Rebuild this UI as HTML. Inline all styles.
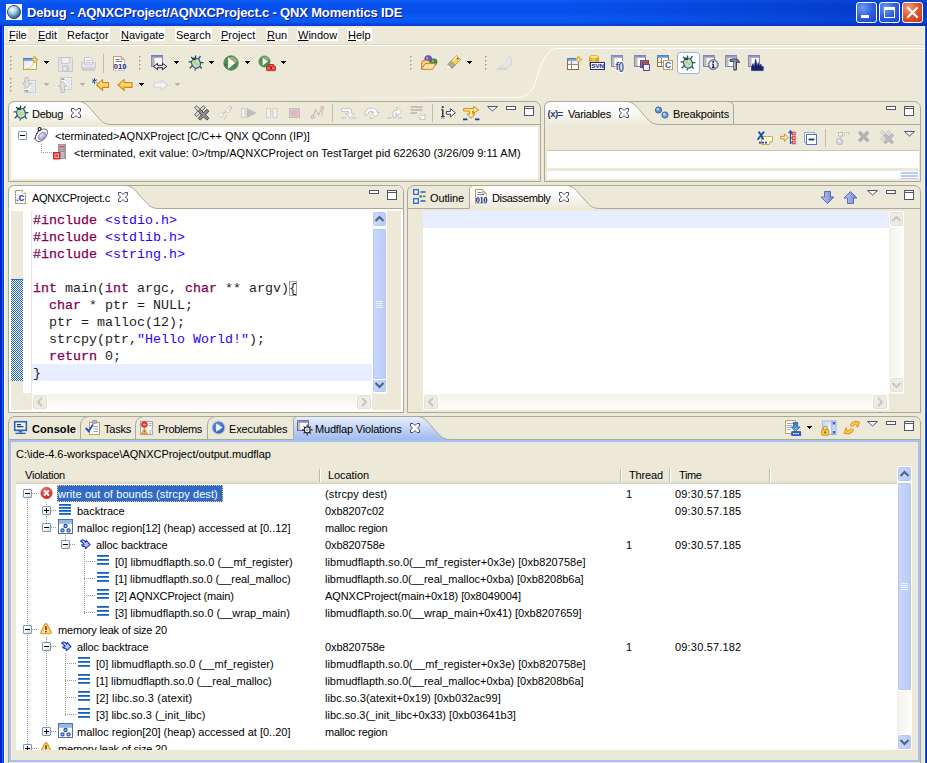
<!DOCTYPE html>
<html><head><meta charset="utf-8"><title>Debug - QNX Momentics IDE</title>
<style>
html,body{margin:0;padding:0}
body{width:927px;height:763px;overflow:hidden;background:#ECE9D8;position:relative;font-family:"Liberation Sans",sans-serif;font-size:11px;color:#000}
div,span.t,span.m,span.c{position:absolute;box-sizing:border-box}
span.t{white-space:pre;line-height:13px;font-size:11px}
span.m{white-space:pre;line-height:12px;height:13px;font-size:11px;background:#FEFEFB;padding:1px 1px 0 1px}
span.c{white-space:pre;font-family:"Liberation Mono",monospace;font-size:13.33px;line-height:17px;color:#1c1c1c}
.i{width:16px;height:16px;overflow:visible}
.i svg{position:absolute;left:0;top:0;overflow:visible}
svg.a{position:absolute;overflow:visible}
u{text-decoration:underline}
.white{background:#fff}
</style></head>
<body>
<div style="left:0px;top:0px;width:927px;height:26px;background:linear-gradient(to bottom,#0C5CF6 0%,#0A58F2 8%,#0850EC 18%,#0850EC 50%,#0A5AF6 68%,#0A58F4 84%,#0848E0 93%,#0638C8 100%);"></div>
<div style="left:0px;top:26px;width:2px;height:737px;background:#0020D0"></div>
<div style="left:2px;top:26px;width:1px;height:737px;background:#0C64F0"></div>
<div style="left:3px;top:26px;width:1px;height:737px;background:#0040E0"></div>
<div style="left:4px;top:26px;width:1px;height:737px;background:#F8F5E6"></div>
<div style="left:924px;top:26px;width:1px;height:737px;background:#F8F5E6"></div>
<div style="left:925px;top:26px;width:1px;height:737px;background:#0C58EC"></div>
<div style="left:926px;top:26px;width:1px;height:737px;background:#0028D4"></div>
<div style="left:560px;top:0px;width:367px;height:26px;background:linear-gradient(to right,rgba(0,20,140,0),rgba(0,20,140,0.32) 80%,rgba(0,20,140,0.36))"></div>
<div class="i" style="left:6px;top:4px"><svg width="16" height="16" viewBox="0 0 16 16"><rect x="0" y="0" width="16" height="16" fill="#fff"/><defs><radialGradient id="ga" cx="38%" cy="32%" r="70%"><stop offset="0" stop-color="#fff"/><stop offset="0.4" stop-color="#A8D4EC"/><stop offset="1" stop-color="#1E4E8A"/></radialGradient></defs><circle cx="8" cy="8" r="6.6" fill="url(#ga)" stroke="#2A4E86" stroke-width="0.9"/></svg></div>
<span class="t" style="left:27px;top:5px;font-size:13px;font-weight:bold;color:#fff;line-height:16px;letter-spacing:-0.17px;text-shadow:1px 1px 0 #0A1883">Debug - AQNXCProject/AQNXCProject.c - QNX Momentics IDE</span>
<div style="left:856px;top:2px;width:21px;height:21px;background:radial-gradient(circle at 30% 25%,#6E9AF2 0%,#2D5FE0 50%,#1C44C4 100%);border:1px solid #fff;border-radius:3px"><div style="left:4px;top:12px;width:8px;height:3px;background:#fff"></div></div>
<div style="left:879px;top:2px;width:21px;height:21px;background:radial-gradient(circle at 30% 25%,#6E9AF2 0%,#2D5FE0 50%,#1C44C4 100%);border:1px solid #fff;border-radius:3px"><div style="left:4px;top:4px;width:11px;height:11px;border:1px solid #fff;border-top:3px solid #fff"></div></div>
<div style="left:902px;top:2px;width:21px;height:21px;background:radial-gradient(circle at 30% 25%,#F0A080 0%,#E2562E 45%,#C4341C 100%);border:1px solid #fff;border-radius:3px"><svg class="a" width="19" height="19" style="left:0;top:0"><path d="M5 5L14 14M14 5L5 14" stroke="#fff" stroke-width="2.2" stroke-linecap="square"/></svg></div>
<span class="m" style="left:8px;top:28px"><u>F</u>ile</span>
<span class="m" style="left:37px;top:28px"><u>E</u>dit</span>
<span class="m" style="left:66px;top:28px">Refac<u>t</u>or</span>
<span class="m" style="left:120px;top:28px"><u>N</u>avigate</span>
<span class="m" style="left:175px;top:28px">Se<u>a</u>rch</span>
<span class="m" style="left:220px;top:28px"><u>P</u>roject</span>
<span class="m" style="left:266px;top:28px"><u>R</u>un</span>
<span class="m" style="left:297px;top:28px"><u>W</u>indow</span>
<span class="m" style="left:347px;top:28px"><u>H</u>elp</span>
<div style="left:4px;top:44px;width:921px;height:1px;background:#DDD9C9"></div>
<div style="left:5px;top:45px;width:920px;height:1px;background:#FBFAF4"></div>
<div style="left:10px;top:56px;width:2px;height:2px;background:#ABA794"></div><div style="left:11px;top:57px;width:1px;height:1px;background:#fff"></div><div style="left:10px;top:60px;width:2px;height:2px;background:#ABA794"></div><div style="left:11px;top:61px;width:1px;height:1px;background:#fff"></div><div style="left:10px;top:64px;width:2px;height:2px;background:#ABA794"></div><div style="left:11px;top:65px;width:1px;height:1px;background:#fff"></div><div style="left:10px;top:68px;width:2px;height:2px;background:#ABA794"></div><div style="left:11px;top:69px;width:1px;height:1px;background:#fff"></div>
<div style="left:10px;top:78px;width:2px;height:2px;background:#ABA794"></div><div style="left:11px;top:79px;width:1px;height:1px;background:#fff"></div><div style="left:10px;top:82px;width:2px;height:2px;background:#ABA794"></div><div style="left:11px;top:83px;width:1px;height:1px;background:#fff"></div><div style="left:10px;top:86px;width:2px;height:2px;background:#ABA794"></div><div style="left:11px;top:87px;width:1px;height:1px;background:#fff"></div><div style="left:10px;top:90px;width:2px;height:2px;background:#ABA794"></div><div style="left:11px;top:91px;width:1px;height:1px;background:#fff"></div>
<div class="i" style="left:22px;top:55px"><svg width="16" height="16" viewBox="0 0 16 16"><defs><linearGradient id="gn" x1="0" y1="0" x2="1" y2="1"><stop offset="0" stop-color="#DCE9FB"/><stop offset="1" stop-color="#fff"/></linearGradient></defs><rect x="1.5" y="3.5" width="13" height="11" fill="url(#gn)" stroke="#C9A347"/><rect x="1" y="3" width="10" height="2.6" fill="#3F76CC"/><path d="M1 4.4H11" stroke="#9CC0F0" stroke-width="0.7"/><path d="M4 14Q11 13.5 12 6" fill="none" stroke="#F2D873" stroke-width="1.2"/><path d="M12.5 1.0L13.5 3.5L16.0 4.5L13.5 5.5L12.5 8.0L11.5 5.5L9.0 4.5L11.5 3.5Z" fill="#FFF6C8" stroke="#D29B1E" stroke-width="1"/></svg></div>
<svg class="a" width="5" height="3" style="left:44px;top:61px" shape-rendering="crispEdges"><path d="M0 0H5V1H0ZM1 1H4V2H1ZM2 2H3V3H2Z" fill="#000"/></svg>
<div class="i" style="left:58px;top:56px"><svg width="16" height="16" viewBox="0 0 16 16"><rect x="0.5" y="1.5" width="14" height="14" fill="#E4E4E6" stroke="#BDBDC2" stroke-dasharray="1.5 0.7"/><rect x="3.5" y="1.8" width="8" height="5.5" fill="#F1F1F1" stroke="#BDBDC2" stroke-width="0.7"/><rect x="4.5" y="10" width="6" height="5" fill="#D6D6DA" stroke="#BDBDC2" stroke-width="0.7"/><rect x="5.8" y="11.3" width="2" height="3" fill="#F1F1F1"/></svg></div>
<div class="i" style="left:81px;top:56px"><svg width="16" height="16" viewBox="0 0 16 16"><rect x="0.5" y="6.5" width="14" height="6" rx="1" fill="#E4E4E6" stroke="#BDBDC2" stroke-width="0.8"/><path d="M3.5 8V1.5H9L11.5 4V8Z" fill="#F8F8F8" stroke="#BDBDC2" stroke-width="0.8"/><path d="M5 4.5H9.5M5 6.5H9.5" stroke="#BDBDC2" stroke-width="0.9"/><rect x="1.5" y="12" width="12" height="2.6" fill="#CFCFD6" stroke="#BDBDC2" stroke-width="0.5"/></svg></div>
<div style="left:103px;top:54px;width:1px;height:19px;background:#BFC0AC"></div>
<div class="i" style="left:112px;top:55px"><svg width="15" height="16" viewBox="0 0 15 16"><path d="M1.5 1.5H9L12.5 5V15.5H1.5Z" fill="#fff" stroke="#B8B8C8" stroke-width="0.8"/><path d="M1.5 15.5V1.5H9" fill="none" stroke="#C9A060"/><path d="M9 1.5L12.5 5H9Z" fill="#E8C078" stroke="#C9A060" stroke-width="0.7"/><path d="M3.5 4.5H7.5M3.5 6.5H10" stroke="#4A74C8" stroke-width="1.1"/><text x="1.8" y="14.2" font-family="Liberation Sans" font-weight="bold" font-size="7.6" fill="#14286E" letter-spacing="0">010</text></svg></div>
<div style="left:139px;top:56px;width:2px;height:2px;background:#ABA794"></div><div style="left:140px;top:57px;width:1px;height:1px;background:#fff"></div><div style="left:139px;top:60px;width:2px;height:2px;background:#ABA794"></div><div style="left:140px;top:61px;width:1px;height:1px;background:#fff"></div><div style="left:139px;top:64px;width:2px;height:2px;background:#ABA794"></div><div style="left:140px;top:65px;width:1px;height:1px;background:#fff"></div><div style="left:139px;top:68px;width:2px;height:2px;background:#ABA794"></div><div style="left:140px;top:69px;width:1px;height:1px;background:#fff"></div>
<div class="i" style="left:150px;top:55px"><svg width="17" height="16" viewBox="0 0 17 16"><rect x="1.5" y="0.5" width="11" height="11" fill="#fff" stroke="#8A86B0"/><rect x="1" y="0" width="12" height="2.6" fill="#6F6DB6"/><path d="M1 1.2H13" stroke="#B8B6E0" stroke-width="0.6"/><rect x="2" y="2.6" width="2.6" height="8.4" fill="#B4B4B4"/><path d="M3.5 11.5L7.5 8.3V10.3H12.5V8.3L16.8 11.5L12.5 14.7V12.7H7.5V14.7Z" fill="#E6E2F6" stroke="#1E1E2E" stroke-width="1"/></svg></div>
<svg class="a" width="5" height="3" style="left:174px;top:61px" shape-rendering="crispEdges"><path d="M0 0H5V1H0ZM1 1H4V2H1ZM2 2H3V3H2Z" fill="#000"/></svg>
<div class="i" style="left:188px;top:55px"><svg width="16" height="16" viewBox="0 0 16 16"><path d="M3.2 1.8L5.8 5M12.5 1.2L10 4.6M0.6 6.8H4M12 7.6H15.4M1.8 13.2L4.6 10.4M13.6 13.6L11.4 10.6M7.6 0.6V3.2M7.2 13.4V15.4" stroke="#1E4A3E" stroke-width="1.25" fill="none"/><ellipse cx="8" cy="8.2" rx="4.3" ry="5" transform="rotate(-20 8 8.2)" fill="#C4DFAE" stroke="#1C5FA0" stroke-width="1.2"/><ellipse cx="7.6" cy="8" rx="2.2" ry="2.8" transform="rotate(-20 7.6 8)" fill="#DCD79A"/><path d="M6 6.4L9.6 10" stroke="#8FB070" stroke-width="0.8"/><ellipse cx="6.4" cy="3.9" rx="1.9" ry="1.4" fill="#1E4A5E"/></svg></div>
<svg class="a" width="5" height="3" style="left:209px;top:61px" shape-rendering="crispEdges"><path d="M0 0H5V1H0ZM1 1H4V2H1ZM2 2H3V3H2Z" fill="#000"/></svg>
<div class="i" style="left:223px;top:55px"><svg width="16" height="16" viewBox="0 0 16 16"><circle cx="8" cy="8" r="7.2" fill="#4C9150"/><circle cx="8" cy="8" r="7.2" fill="none" stroke="#3F7F43" stroke-width="0.8"/><path d="M9 1.6A6.6 6.6 0 0 1 14.4 6.4L12 7.8L6 2.6Z" fill="#A7AE8C" opacity="0.85"/><path d="M5.2 2.2L12.4 8L5.2 13.8Z" fill="#fff"/><path d="M5.2 2.2L12.4 8" stroke="#E0B040" stroke-width="0.8"/><path d="M1.6 9L2.6 11L3.6 9M11 10.5L12.2 9" stroke="#2E5E30" stroke-width="0.7" fill="none"/></svg></div>
<svg class="a" width="5" height="3" style="left:245px;top:61px" shape-rendering="crispEdges"><path d="M0 0H5V1H0ZM1 1H4V2H1ZM2 2H3V3H2Z" fill="#000"/></svg>
<div class="i" style="left:258px;top:55px"><svg width="18" height="16" viewBox="0 0 18 16"><circle cx="6.5" cy="6.5" r="5.6" fill="#4C9150" stroke="#3F7F43" stroke-width="0.6"/><path d="M7 1.6A5 5 0 0 1 11.4 5L9.6 6L5.4 2.6Z" fill="#A7AE8C" opacity="0.8"/><path d="M4.6 2.6L9.8 6.5L4.6 10.4Z" fill="#fff"/><rect x="8.5" y="11" width="9" height="4.6" rx="0.8" fill="#E8423A" stroke="#B4201C" stroke-width="0.8"/><path d="M10.8 11V9.6H15.2V11" fill="none" stroke="#C02824" stroke-width="1.2"/><path d="M9.5 13H16.5" stroke="#F8A8A0" stroke-width="0.8"/><rect x="12.2" y="12.2" width="1.8" height="1.6" fill="#7A1410"/></svg></div>
<svg class="a" width="5" height="3" style="left:281px;top:61px" shape-rendering="crispEdges"><path d="M0 0H5V1H0ZM1 1H4V2H1ZM2 2H3V3H2Z" fill="#000"/></svg>
<div class="i" style="left:22px;top:77px"><svg width="16" height="16" viewBox="0 0 16 16"><rect x="2.5" y="3.5" width="11" height="12" fill="#F4F4F6" stroke="#BDBDC2" stroke-dasharray="1.5 0.7"/><path d="M9 6H12.5M9 8H12.5M9 10H12.5M8 12H12.5M6 14H12.5" stroke="#C8D4E4" stroke-width="0.9"/><path d="M3 0.5H6.5V6H9.5L4.8 11.5L0.2 6H3Z" fill="#E2DFD6" stroke="#BDBDC2" stroke-width="0.9"/><rect x="3.2" y="13" width="3" height="1.8" fill="#9C9CA8"/></svg></div>
<svg class="a" width="5" height="3" style="left:44px;top:83px" shape-rendering="crispEdges"><path d="M0 0H5V1H0ZM1 1H4V2H1ZM2 2H3V3H2Z" fill="#B5B1A2"/></svg>
<div class="i" style="left:58px;top:77px"><svg width="16" height="16" viewBox="0 0 16 16"><rect x="2.5" y="0.5" width="11" height="12" fill="#F4F4F6" stroke="#BDBDC2" stroke-dasharray="1.5 0.7"/><path d="M7.5 3H12M8.5 5H12M9.5 7H12M10 9H12M10 11H12" stroke="#C8D4E4" stroke-width="0.9"/><path d="M3 15.5H6.5V9.5H9L4.6 4L0.2 9.5H3Z" fill="#E2DFD6" stroke="#BDBDC2" stroke-width="0.9"/><rect x="3.4" y="1.4" width="3" height="1.6" fill="#9C9CA8"/></svg></div>
<svg class="a" width="5" height="3" style="left:80px;top:83px" shape-rendering="crispEdges"><path d="M0 0H5V1H0ZM1 1H4V2H1ZM2 2H3V3H2Z" fill="#B5B1A2"/></svg>
<div class="i" style="left:92px;top:77px"><svg width="18" height="16" viewBox="0 0 18 16"><defs><linearGradient id="ya1" x1="0" y1="0" x2="0" y2="1"><stop offset="0" stop-color="#FFF4C4"/><stop offset="0.55" stop-color="#FAD566"/><stop offset="1" stop-color="#F2B93A"/></linearGradient></defs><path d="M4.6 8L10.6 2.6V5.6H16.6V10.4H10.6V13.4Z" fill="url(#ya1)" stroke="#D08A14" stroke-width="1.1" stroke-linejoin="round"/><path d="M2.5 1.2V6.8M0.2 2.6L4.8 5.4M4.8 2.6L0.2 5.4" stroke="#2444A8" stroke-width="1.1"/></svg></div>
<div class="i" style="left:117px;top:77px"><svg width="16" height="16" viewBox="0 0 16 16"><defs><linearGradient id="ya2" x1="0" y1="0" x2="0" y2="1"><stop offset="0" stop-color="#FFF4C4"/><stop offset="0.55" stop-color="#FAD566"/><stop offset="1" stop-color="#F2B93A"/></linearGradient></defs><path d="M1 8L7.2 2.6V5.6H15V10.4H7.2V13.4Z" fill="url(#ya2)" stroke="#D08A14" stroke-width="1.1" stroke-linejoin="round"/></svg></div>
<svg class="a" width="5" height="3" style="left:139px;top:83px" shape-rendering="crispEdges"><path d="M0 0H5V1H0ZM1 1H4V2H1ZM2 2H3V3H2Z" fill="#000"/></svg>
<div class="i" style="left:153px;top:77px"><svg width="16" height="16" viewBox="0 0 16 16"><path d="M14.6 8L8.4 2.8V5.8H1.2V10.2H8.4V13.2Z" fill="#F4F4F4" stroke="#D4D4D8" stroke-width="1.1" stroke-linejoin="round"/></svg></div>
<svg class="a" width="5" height="3" style="left:175px;top:83px" shape-rendering="crispEdges"><path d="M0 0H5V1H0ZM1 1H4V2H1ZM2 2H3V3H2Z" fill="#B5B1A2"/></svg>
<div style="left:410px;top:56px;width:2px;height:2px;background:#ABA794"></div><div style="left:411px;top:57px;width:1px;height:1px;background:#fff"></div><div style="left:410px;top:60px;width:2px;height:2px;background:#ABA794"></div><div style="left:411px;top:61px;width:1px;height:1px;background:#fff"></div><div style="left:410px;top:64px;width:2px;height:2px;background:#ABA794"></div><div style="left:411px;top:65px;width:1px;height:1px;background:#fff"></div><div style="left:410px;top:68px;width:2px;height:2px;background:#ABA794"></div><div style="left:411px;top:69px;width:1px;height:1px;background:#fff"></div>
<div class="i" style="left:421px;top:55px"><svg width="16" height="16" viewBox="0 0 16 16"><circle cx="7.2" cy="4" r="3.5" fill="#6B56B4" stroke="#4A3A92" stroke-width="0.6"/><circle cx="6.2" cy="3" r="1.3" fill="#A898DC"/><circle cx="12.8" cy="7" r="3.3" fill="#3F8F4A" stroke="#2A6E34" stroke-width="0.6"/><circle cx="12" cy="6" r="1.1" fill="#86C48E"/><path d="M0.6 14.4V6.8L3 5.2H7L8.6 7" fill="#F4CE84" stroke="#D0742E" stroke-width="0.9"/><path d="M0.6 14.4L4 8.6H15L11.4 14.4Z" fill="#FBE3A6" stroke="#D0742E" stroke-width="0.9" stroke-linejoin="round"/></svg></div>
<div class="i" style="left:445px;top:55px"><svg width="16" height="16" viewBox="0 0 16 16"><path d="M0.4 14.8L3.8 8.8L7.8 12.6Z" fill="#FFFBE0" stroke="#EADCA0" stroke-width="0.6"/><path d="M3 9.4L6 6.2L10 10.2L7 13.4Z" fill="#A9A9B2" stroke="#8A6E3C" stroke-width="0.7"/><path d="M6 6.2L11.6 0.6L15.6 4.6L10 10.2Z" fill="#F7D263" stroke="#C48A1E" stroke-width="0.8"/><path d="M8.6 5L12 1.6" stroke="#FFF0B0" stroke-width="1.4"/><circle cx="12.6" cy="3.6" r="0.9" fill="#3A5AA8"/></svg></div>
<svg class="a" width="5" height="3" style="left:467px;top:61px" shape-rendering="crispEdges"><path d="M0 0H5V1H0ZM1 1H4V2H1ZM2 2H3V3H2Z" fill="#000"/></svg>
<div style="left:485px;top:56px;width:2px;height:2px;background:#ABA794"></div><div style="left:486px;top:57px;width:1px;height:1px;background:#fff"></div><div style="left:485px;top:60px;width:2px;height:2px;background:#ABA794"></div><div style="left:486px;top:61px;width:1px;height:1px;background:#fff"></div><div style="left:485px;top:64px;width:2px;height:2px;background:#ABA794"></div><div style="left:486px;top:65px;width:1px;height:1px;background:#fff"></div><div style="left:485px;top:68px;width:2px;height:2px;background:#ABA794"></div><div style="left:486px;top:69px;width:1px;height:1px;background:#fff"></div>
<div class="i" style="left:496px;top:55px"><svg width="16" height="16" viewBox="0 0 16 16"><path d="M3 13.4L13.4 1L15.2 2.6V10L10 13.4Z" fill="#E2E2E4" stroke="#D0D0D4" stroke-width="0.8"/><path d="M6 10L13 3M8.5 11.5L14.5 5.5" stroke="#F4F4F4" stroke-width="0.9"/><path d="M0.5 14.2H11" stroke="#BDBDC2" stroke-dasharray="1.2 0.8"/></svg></div>
<svg class="a" width="927" height="60" style="left:0;top:44px"><defs><linearGradient id="fl" x1="0" y1="0" x2="1" y2="0"><stop offset="0" stop-color="#fff" stop-opacity="0"/><stop offset="0.5" stop-color="#fff" stop-opacity="0.3"/><stop offset="1" stop-color="#fff" stop-opacity="0.9"/></linearGradient></defs><rect x="200" y="53" width="320" height="1" fill="url(#fl)"/><path d="M519 53.5 C 531 53.5 535 40 538 30 C 541 20 545 12 549 8 C 552 5 554 4.5 559 4.5 L925 4.5" fill="none" stroke="#fff" stroke-width="1"/></svg>
<div class="i" style="left:566px;top:55px"><svg width="16" height="16" viewBox="0 0 16 16"><rect x="1.5" y="3.5" width="11" height="11" fill="#fff" stroke="#8E6A44"/><rect x="1" y="3" width="9" height="2.6" fill="#3F76CC"/><path d="M1 4.4H10" stroke="#9CC0F0" stroke-width="0.7"/><path d="M5.5 6V14.5M1.5 9.5H12.5" stroke="#A88458"/><rect x="2" y="6" width="3" height="3" fill="#E4EEFB"/><rect x="6" y="6" width="6" height="3" fill="#E4EEFB"/><path d="M12.5 1.0L13.5 3.5L16.0 4.5L13.5 5.5L12.5 8.0L11.5 5.5L9.0 4.5L11.5 3.5Z" fill="#FFF6C8" stroke="#D29B1E" stroke-width="1"/></svg></div>
<div class="i" style="left:589px;top:55px"><svg width="16" height="16" viewBox="0 0 16 16"><defs><linearGradient id="gcy" x1="0" y1="0" x2="1" y2="0"><stop offset="0" stop-color="#E8A820"/><stop offset="0.45" stop-color="#FCE27A"/><stop offset="1" stop-color="#E09A18"/></linearGradient></defs><path d="M0.5 2V11.5H9.5V2Z" fill="url(#gcy)" stroke="#C88A18" stroke-width="0.6"/><ellipse cx="5" cy="2" rx="4.5" ry="1.7" fill="#FBE58C" stroke="#C88A18" stroke-width="0.6"/><path d="M0.5 5Q5 7 9.5 5" fill="none" stroke="#C88A18" stroke-width="0.7"/><rect x="1.5" y="7.5" width="14" height="7" fill="#F4F6FC" stroke="#1E2E7A"/><text x="2.6" y="13.4" font-family="Liberation Sans" font-weight="bold" font-size="6.2" fill="#1E2E7A" letter-spacing="-0.15">SVN</text></svg></div>
<div class="i" style="left:611px;top:55px"><svg width="17" height="16" viewBox="0 0 17 16"><rect x="0.5" y="0.5" width="11" height="11" fill="#fff" stroke="#8A86B0"/><rect x="0" y="0" width="12" height="2.6" fill="#7A78B8"/><path d="M0 1.2H12" stroke="#C0BEE4" stroke-width="0.6"/><rect x="1" y="2.6" width="2.6" height="8.4" fill="#BEBEB8"/><text x="4.6" y="14.6" font-family="Liberation Sans" font-weight="bold" font-size="10" fill="#4A5A94" stroke="#fff" stroke-width="1.6" paint-order="stroke" letter-spacing="-0.7">f()</text></svg></div>
<div class="i" style="left:634px;top:55px"><svg width="16" height="16" viewBox="0 0 16 16"><rect x="0.5" y="0.5" width="11" height="11" fill="#fff" stroke="#8A86B0"/><rect x="0" y="0" width="12" height="2.6" fill="#7A78B8"/><path d="M0 1.2H12" stroke="#C0BEE4" stroke-width="0.6"/><rect x="1" y="2.6" width="2.6" height="8.4" fill="#BEBEB8"/><rect x="6.5" y="5.5" width="8" height="7" fill="#7A74B4" stroke="#5A548E"/><rect x="8.5" y="7.5" width="6" height="5" fill="#E8463C" stroke="#B42A22" stroke-width="0.8"/><rect x="9.5" y="9.5" width="6" height="6" fill="#F8F6FF" stroke="#5A4E9E"/></svg></div>
<div class="i" style="left:657px;top:55px"><svg width="16" height="16" viewBox="0 0 16 16"><rect x="0.5" y="0.5" width="11" height="11" fill="#fff" stroke="#8E6A44"/><rect x="0" y="0" width="12" height="2.6" fill="#3F76CC"/><path d="M0 1.2H12" stroke="#9CC0F0" stroke-width="0.6"/><path d="M4.5 3V11.5M0.5 7.5H11.5" stroke="#A88458"/><rect x="1" y="3.2" width="3" height="3.6" fill="#E4EEFB"/><rect x="6.5" y="5.5" width="9" height="9" fill="#FDFDFB" stroke="#C49A50"/><text x="8" y="13.4" font-family="Liberation Sans" font-weight="bold" font-size="8.6" fill="#2E5CB8">C</text></svg></div>
<div style="left:677px;top:52px;width:23px;height:22px;border:1px solid #98B5E2;background:#fff;border-radius:3px"></div>
<div class="i" style="left:680px;top:55px"><svg width="16" height="16" viewBox="0 0 16 16"><path d="M3.2 1.8L5.8 5M12.5 1.2L10 4.6M0.6 6.8H4M12 7.6H15.4M1.8 13.2L4.6 10.4M13.6 13.6L11.4 10.6M7.6 0.6V3.2M7.2 13.4V15.4" stroke="#1E4A3E" stroke-width="1.25" fill="none"/><ellipse cx="8" cy="8.2" rx="4.3" ry="5" transform="rotate(-20 8 8.2)" fill="#C4DFAE" stroke="#1C5FA0" stroke-width="1.2"/><ellipse cx="7.6" cy="8" rx="2.2" ry="2.8" transform="rotate(-20 7.6 8)" fill="#DCD79A"/><path d="M6 6.4L9.6 10" stroke="#8FB070" stroke-width="0.8"/><ellipse cx="6.4" cy="3.9" rx="1.9" ry="1.4" fill="#1E4A5E"/></svg></div>
<div class="i" style="left:703px;top:55px"><svg width="16" height="16" viewBox="0 0 16 16"><rect x="0.5" y="0.5" width="11" height="11" fill="#fff" stroke="#8A86B0"/><rect x="0" y="0" width="12" height="2.6" fill="#7A78B8"/><path d="M0 1.2H12" stroke="#C0BEE4" stroke-width="0.6"/><rect x="1" y="2.6" width="2.6" height="8.4" fill="#BEBEB8"/><circle cx="10.2" cy="9.6" r="5" fill="#A8A8C4" stroke="#4A4A6A" stroke-width="1" stroke-dasharray="1.6 0.6"/><circle cx="10.2" cy="9.6" r="3.4" fill="#F0F0F8"/><path d="M10.3 9V12.4M9.2 9.2H10.3M9 12.4H11.6" stroke="#1E1E4A" stroke-width="1.3"/><circle cx="10.2" cy="7" r="0.95" fill="#1E1E4A"/></svg></div>
<div class="i" style="left:725px;top:55px"><svg width="16" height="16" viewBox="0 0 16 16"><rect x="0.5" y="0.5" width="11" height="11" fill="#fff" stroke="#8A86B0"/><rect x="0" y="0" width="12" height="2.6" fill="#7A78B8"/><path d="M0 1.2H12" stroke="#C0BEE4" stroke-width="0.6"/><rect x="1" y="2.6" width="2.6" height="8.4" fill="#BEBEB8"/><path d="M5 4.5Q9 3 13 4.5L14.6 7.4L12.6 7.4L12 6.4H11.4V15H8.8V6.4H5Z" fill="#8890A8" stroke="#2A2E48" stroke-width="0.9" stroke-linejoin="round"/><path d="M9.6 7V14" stroke="#D8DCEC" stroke-width="0.8"/></svg></div>
<div class="i" style="left:748px;top:55px"><svg width="16" height="16" viewBox="0 0 16 16"><rect x="0.5" y="0.5" width="11" height="11" fill="#fff" stroke="#8A86B0"/><rect x="0" y="0" width="12" height="2.6" fill="#7A78B8"/><path d="M0 1.2H12" stroke="#C0BEE4" stroke-width="0.6"/><rect x="1" y="2.6" width="2.6" height="8.4" fill="#BEBEB8"/><path d="M3.5 15.6V12L5 8.5L6.2 12L7.6 4L9.2 11L10.4 7.5L11.6 12L12.8 9L14 12.6L15.2 11V15.6Z" fill="#16206A" stroke="#16206A" stroke-width="0.6" stroke-linejoin="round"/></svg></div>
<svg class="a" width="0" height="0"><defs>
<linearGradient id="gw" x1="0" y1="0" x2="0" y2="1"><stop offset="0" stop-color="#FFFFFF"/><stop offset="0.45" stop-color="#FAF9F5"/><stop offset="1" stop-color="#ECE9D8"/></linearGradient>
<linearGradient id="gb" x1="0" y1="0" x2="0" y2="1"><stop offset="0" stop-color="#E9EFFB"/><stop offset="0.5" stop-color="#C3D4F4"/><stop offset="1" stop-color="#9EBAEE"/></linearGradient>
</defs></svg>
<div style="left:8px;top:101px;width:533px;height:81px;border:1px solid #ACA899;border-radius:7px 7px 0 0;background:#ECE9D8"></div>
<svg class="a" width="533" height="26" style="left:8px;top:101px"><path d="M0.5 23.5 V7 Q0.5 0.5 7.0 0.5 H69 C 76 0.5 79 3.5 83 8.5 L 91 17.5 C 95 22.0 98 23.5 104 23.5  V24.5 H0.5 Z" fill="url(#gw)"/><path d="M0.5 23.5 V7 Q0.5 0.5 7.0 0.5 H69 C 76 0.5 79 3.5 83 8.5 L 91 17.5 C 95 22.0 98 23.5 104 23.5  H532.5" fill="none" stroke="#ACA899"/></svg>
<div class="white" style="left:11px;top:127px;width:527px;height:52px;"></div>
<div class="i" style="left:13px;top:105px"><svg width="16" height="16" viewBox="0 0 16 16"><path d="M3.2 1.8L5.8 5M12.5 1.2L10 4.6M0.6 6.8H4M12 7.6H15.4M1.8 13.2L4.6 10.4M13.6 13.6L11.4 10.6M7.6 0.6V3.2M7.2 13.4V15.4" stroke="#1E4A3E" stroke-width="1.25" fill="none"/><ellipse cx="8" cy="8.2" rx="4.3" ry="5" transform="rotate(-20 8 8.2)" fill="#C4DFAE" stroke="#1C5FA0" stroke-width="1.2"/><ellipse cx="7.6" cy="8" rx="2.2" ry="2.8" transform="rotate(-20 7.6 8)" fill="#DCD79A"/><path d="M6 6.4L9.6 10" stroke="#8FB070" stroke-width="0.8"/><ellipse cx="6.4" cy="3.9" rx="1.9" ry="1.4" fill="#1E4A5E"/></svg></div>
<span class="t" style="left:32px;top:108px;;letter-spacing:-0.287px">Debug</span>
<svg class="a" width="10" height="10" style="left:71px;top:108px"><path d="M0.5 0.5H3L5 2.5L7 0.5H9.5V3L7.5 5L9.5 7V9.5H7L5 7.5L3 9.5H0.5V7L2.5 5L0.5 3Z" fill="#fff" stroke="#4A4A6E" stroke-width="1"/></svg>
<div class="i" style="left:194px;top:105px"><svg width="16" height="16" viewBox="0 0 16 16"><path d="M0.6 2.8l2.4 -2 3.6 3.6 3.6 -3.6 2.4 2 -3.6 4 3.6 4 -2.4 2 -3.6 -3.6 -3.6 3.6 -2.4 -2 3.6 -4Z" fill="#D8D8D8" stroke="#4A4A4A" stroke-width="0.9" transform="scale(0.9)"/><path d="M4.6 6.8l2.4 -2 3.6 3.6 3.6 -3.6 2.4 2 -3.6 4 3.6 4 -2.4 2 -3.6 -3.6 -3.6 3.6 -2.4 -2 3.6 -4Z" fill="#8E8E8E" stroke="#3A3A3A" stroke-width="0.9" transform="scale(0.9)"/></svg></div>
<div class="i" style="left:217px;top:105px"><svg width="16" height="16" viewBox="0 0 16 16"><path d="M1 10.5L4.5 7L7 9.5L3.5 13Z M8 5.5L11 2.5L13.5 5L10.5 8Z" fill="#F1F1F1" stroke="#BDBDC2" stroke-width="0.9" stroke-dasharray="1.4 0.7"/><path d="M5.5 8.5L9.5 6.5M12 1L15 2.5L13.5 5.5M9.5 10.5L7.5 14.5" fill="none" stroke="#BDBDC2" stroke-width="0.9"/></svg></div>
<div class="i" style="left:241px;top:105px"><svg width="16" height="16" viewBox="0 0 16 16"><rect x="0.5" y="3.5" width="3.6" height="9" fill="#F1F1F1" stroke="#BDBDC2" stroke-dasharray="1.4 0.7"/><path d="M6 3.4L15 8L6 12.6Z" fill="#B9BFB9" stroke="#BDBDC2" stroke-width="0.6"/></svg></div>
<div class="i" style="left:264px;top:105px"><svg width="16" height="16" viewBox="0 0 16 16"><rect x="2.5" y="3.5" width="4" height="9" fill="#F1F1F1" stroke="#BDBDC2" stroke-dasharray="1.4 0.7"/><rect x="9" y="3.5" width="4" height="9" fill="#F1F1F1" stroke="#BDBDC2" stroke-dasharray="1.4 0.7"/></svg></div>
<div class="i" style="left:287px;top:105px"><svg width="16" height="16" viewBox="0 0 16 16"><rect x="2.5" y="3.5" width="10" height="9" fill="#E6C4CC" stroke="#BDBDC2"/><rect x="4.5" y="5.5" width="6" height="5" fill="#D4A8B4"/><path d="M6 6V10M8 6V10M10 6V10" stroke="#EBD0D6" stroke-width="0.8"/></svg></div>
<div class="i" style="left:310px;top:105px"><svg width="16" height="16" viewBox="0 0 16 16"><path d="M3 11.5L5.5 4.5L8.5 10L12 3.5" fill="none" stroke="#BDBDC2" stroke-width="1.1"/><path d="M12 3.5V11" stroke="#BDBDC2" stroke-width="1"/><circle cx="12.4" cy="3" r="1.8" fill="#ECC8D0" stroke="#D0A8B4" stroke-width="0.7"/><circle cx="2.6" cy="12" r="1.8" fill="#ECC8D0" stroke="#D0A8B4" stroke-width="0.7"/></svg></div>
<div class="i" style="left:341px;top:105px"><svg width="16" height="16" viewBox="0 0 16 16"><path d="M0.6 3.6H8.4Q10.6 3.6 10.6 6V8.6H13.6L9.2 13.2L4.8 8.6H7.8V6.4H0.6Z" fill="#fff" stroke="#BDBDC2" stroke-width="0.9"/><path d="M0.5 13H4.5M11.5 13H15.5" stroke="#B4BCD8" stroke-width="1.6" stroke-dasharray="1.2 0.6"/></svg></div>
<div class="i" style="left:364px;top:105px"><svg width="16" height="16" viewBox="0 0 16 16"><path d="M1 10Q1 3.2 7.4 3.2Q12.6 3.2 13 7.4H15.4L11.4 12L7.4 7.4H10Q9.6 6 7.4 6Q3.8 6 3.8 10Z" fill="#fff" stroke="#BDBDC2" stroke-width="0.9"/><path d="M5.5 13H9.5" stroke="#B4BCD8" stroke-width="1.6" stroke-dasharray="1.2 0.6"/></svg></div>
<div class="i" style="left:387px;top:105px"><svg width="16" height="16" viewBox="0 0 16 16"><path d="M6 12.6V8Q6 5.4 8.6 5.4H10V2.4L14.8 6.8L10 11.2V8.2H8.8V12.6Z" fill="#fff" stroke="#BDBDC2" stroke-width="0.9"/><path d="M0.5 13H4.5M11 13H15" stroke="#B4BCD8" stroke-width="1.6" stroke-dasharray="1.2 0.6"/></svg></div>
<div class="i" style="left:410px;top:105px"><svg width="16" height="16" viewBox="0 0 16 16"><path d="M0.5 2H12.5M0.5 5H12.5M0.5 8H7" stroke="#B4B4B8" stroke-width="1.7"/><path d="M7.5 10.2Q10 7.6 12.6 9.6L14.4 8V13.4H9L10.8 11.6Q9.8 10.8 9 11.8Z" fill="#fff" stroke="#BDBDC2" stroke-width="0.9" stroke-linejoin="round" transform="translate(0.5,1)"/></svg></div>
<div class="i" style="left:440px;top:105px"><svg width="16" height="16" viewBox="0 0 16 16"><path d="M2.8 4.8V11.4" stroke="#3A3E52" stroke-width="1.6"/><path d="M1 11.6H4.8M1.2 4.6H2.8" stroke="#3A3E52" stroke-width="1.3"/><circle cx="2.8" cy="2.2" r="1.1" fill="#3A3E52"/><path d="M1 13.5H5" stroke="#7A8CC4" stroke-width="1" stroke-dasharray="1 1"/><path d="M6.4 6.4H10.6V3.8L15.4 7.8L10.6 11.8V9.2H6.4Z" fill="#fff" stroke="#3A3E52" stroke-width="1"/></svg></div>
<div class="i" style="left:463px;top:105px"><svg width="17" height="16" viewBox="0 0 17 16"><path d="M0.6 3.6H10.6V1.4L15.6 4.8L10.6 8.2V6H9.6V9H12L8 13.2L4 9H6.4V6H0.6Z" fill="#FDE9A0" stroke="#D08A14" stroke-width="1" stroke-linejoin="round"/><path d="M0 14.4H4.4M12 14.4H16.4" stroke="#1E3A9A" stroke-width="1.7"/></svg></div>
<div style="left:332px;top:104px;width:1px;height:18px;background:#BFC0AC"></div>
<div style="left:432px;top:104px;width:1px;height:18px;background:#BFC0AC"></div>
<svg class="a" width="11" height="6" style="left:487px;top:106px"><path d="M0.5 0.5H10.5L5.5 5Z" fill="#fff" stroke="#55556A" stroke-width="1"/></svg>
<div style="left:506px;top:106px;width:10px;height:4px;border:1px solid #55556A;background:#fff"></div><div style="left:524px;top:106px;width:10px;height:10px;border:1px solid #55556A;background:#fff"><div style="left:0;top:1px;width:8px;height:1px;background:#55556A"></div></div>
<div style="left:18px;top:131px;width:9px;height:9px;border:1px solid #7F9DB9;background:#fff;border-radius:1px"><div style="left:1px;top:3px;width:5px;height:1px;background:#000"></div></div>
<div class="i" style="left:33px;top:127px"><svg width="17" height="16" viewBox="0 0 17 16"><ellipse cx="8.4" cy="8.2" rx="7.4" ry="4.6" transform="rotate(-48 8.4 8.2)" fill="#fff" stroke="#6A6A7A" stroke-width="1"/><ellipse cx="9" cy="9" rx="4.6" ry="2.9" transform="rotate(-48 9 9)" fill="#B8B4E4" stroke="#8A86C0" stroke-width="0.8"/><ellipse cx="8.4" cy="8.4" rx="2.2" ry="1.2" transform="rotate(-48 8.4 8.4)" fill="#DEDCF4"/><circle cx="6.6" cy="2" r="1.5" fill="#fff" stroke="#111" stroke-width="1.2"/><path d="M5.6 3L1.2 12.4" stroke="#3A4A6A" stroke-width="0.9"/></svg></div>
<span class="t" style="left:55px;top:130px;;letter-spacing:-0.041px">&lt;terminated&gt;AQNXProject [C/C++ QNX QConn (IP)]</span>
<div style="left:41px;top:144px;width:1px;height:9px;background:repeating-linear-gradient(to bottom,#9A9A9A 0,#9A9A9A 1px,transparent 1px,transparent 2px)"></div>
<div style="left:41px;top:152px;width:11px;height:1px;background:repeating-linear-gradient(to right,#9A9A9A 0,#9A9A9A 1px,transparent 1px,transparent 2px)"></div>
<div class="i" style="left:52px;top:144px"><svg width="16" height="16" viewBox="0 0 16 16"><defs><linearGradient id="gsv" x1="0" y1="0" x2="1" y2="0"><stop offset="0" stop-color="#9A9AA2"/><stop offset="0.5" stop-color="#D8D8E0"/><stop offset="1" stop-color="#8E8E96"/></linearGradient></defs><rect x="6.5" y="0.5" width="7" height="14" fill="url(#gsv)" stroke="#8A8A92" stroke-width="0.8"/><rect x="7.6" y="1.8" width="4.8" height="1.8" fill="#E84A40"/><path d="M7.6 5.4H12.4M7.6 7.4H12.4" stroke="#7A7A86" stroke-width="0.9"/><rect x="9" y="9" width="2.4" height="4.6" fill="#B8B8D0"/><rect x="1.7" y="8.7" width="6" height="6" fill="#F6B0A8" stroke="#D42420" stroke-width="1.4"/><rect x="3.4" y="10.4" width="2.6" height="2.6" fill="#E84238"/></svg></div>
<span class="t" style="left:74px;top:147px;;letter-spacing:0.036px">&lt;terminated, exit value: 0&gt;/tmp/AQNXCProject on TestTarget pid 622630 (3/26/09 9:11 AM)</span>
<div style="left:544px;top:101px;width:377px;height:81px;border:1px solid #ACA899;border-radius:7px 7px 0 0;background:#ECE9D8"></div>
<svg class="a" width="377" height="26" style="left:544px;top:101px"><path d="M0.5 23.5 V7 Q0.5 0.5 7.0 0.5 H81 C 88 0.5 91 3.5 95 8.5 L 103 17.5 C 107 22.0 110 23.5 116 23.5  V24.5 H0.5 Z" fill="url(#gw)"/><path d="M0.5 23.5 V7 Q0.5 0.5 7.0 0.5 H81 C 88 0.5 91 3.5 95 8.5 L 103 17.5 C 107 22.0 110 23.5 116 23.5  H376.5" fill="none" stroke="#ACA899"/></svg>
<svg class="a" width="200" height="26" style="left:544px;top:101px"><path d="M116 0.5 H184 Q189.5 0.5 189.5 6 V23" fill="none" stroke="#ACA899"/></svg>
<div class="i" style="left:548px;top:105px"><svg width="18" height="16" viewBox="0 0 18 16"><text x="-0.5" y="11.5" font-family="Liberation Sans" font-weight="bold" font-size="9.6" fill="#2E3A6A" letter-spacing="-0.55">(x)=</text></svg></div>
<span class="t" style="left:568px;top:108px;;letter-spacing:-0.229px">Variables</span>
<svg class="a" width="10" height="10" style="left:619px;top:108px"><path d="M0.5 0.5H3L5 2.5L7 0.5H9.5V3L7.5 5L9.5 7V9.5H7L5 7.5L3 9.5H0.5V7L2.5 5L0.5 3Z" fill="#fff" stroke="#4A4A6E" stroke-width="1"/></svg>
<div class="i" style="left:654px;top:104px"><svg width="16" height="16" viewBox="0 0 16 16"><circle cx="4.5" cy="6" r="3.1" fill="#5F8FCB" stroke="#2E5E9E" stroke-width="0.9"/><circle cx="3.8" cy="5.2" r="1.2" fill="#C4DCF4"/><circle cx="11" cy="11" r="3.1" fill="#6FA3D8" stroke="#2E5E9E" stroke-width="0.9"/><circle cx="10.3" cy="10.2" r="1.2" fill="#C4DCF4"/></svg></div>
<span class="t" style="left:673px;top:108px;;letter-spacing:-0.193px">Breakpoints</span>
<div style="left:886px;top:106px;width:10px;height:4px;border:1px solid #55556A;background:#fff"></div><div style="left:904px;top:106px;width:10px;height:10px;border:1px solid #55556A;background:#fff"><div style="left:0;top:1px;width:8px;height:1px;background:#55556A"></div></div>
<div class="i" style="left:757px;top:130px"><svg width="16" height="16" viewBox="0 0 16 16"><path d="M4.5 6.5H15.5V11.5L12.5 14.5H4.5Z" fill="#FFFBE8" stroke="#D0A850"/><path d="M12.5 14.5V11.5H15.5" fill="#F4DC98" stroke="#D0A850" stroke-width="0.7"/><path d="M1.6 1.6Q4.4 5 6.4 9.6M7 1.6Q4 5.4 0.6 9.8" stroke="#1E4AB4" stroke-width="1.8" fill="none"/><path d="M2 12.6H10.4" stroke="#1E3A9A" stroke-width="1.7" stroke-dasharray="2 1"/></svg></div>
<div class="i" style="left:780px;top:130px"><svg width="16" height="16" viewBox="0 0 16 16"><path d="M0.6 6.4H4.4V4L8.4 7.6L4.4 11.2V8.8H0.6Z" fill="#FFF4C4" stroke="#C8881A" stroke-width="0.9"/><path d="M10.5 0.8V14M10.5 3.5H12.5M10.5 8H12.5M10.5 12.5H12.5" stroke="#2448A8" stroke-width="1.2"/><path d="M8.6 3.2L10.5 0.8L12.4 3.2" fill="none" stroke="#2448A8" stroke-width="1.1"/><rect x="12.4" y="2.2" width="2.8" height="2.8" fill="#F4A8A0" stroke="#DC3A32" stroke-width="0.9"/><rect x="12.4" y="6.6" width="2.8" height="2.8" fill="#F4A8A0" stroke="#DC3A32" stroke-width="0.9"/><rect x="12.4" y="11" width="2.8" height="2.8" fill="#F4A8A0" stroke="#DC3A32" stroke-width="0.9"/></svg></div>
<div class="i" style="left:803px;top:130px"><svg width="16" height="16" viewBox="0 0 16 16"><rect x="1.5" y="2.5" width="10" height="10" fill="#F4F8FF" stroke="#8CA8DC"/><rect x="3.5" y="4.5" width="10" height="10" fill="#fff" stroke="#4A72C0"/><path d="M5.6 9.5H11.4" stroke="#14306E" stroke-width="1.7"/></svg></div>
<div class="i" style="left:835px;top:130px"><svg width="16" height="16" viewBox="0 0 16 16"><rect x="3.5" y="2.5" width="4" height="3.6" fill="#F1F1F1" stroke="#BDBDC2"/><path d="M9.5 6V2.5H14V5" fill="none" stroke="#BDBDC2" stroke-dasharray="1.5 0.8"/><path d="M5.5 6V9" stroke="#BDBDC2"/><circle cx="4.6" cy="11.6" r="3.2" fill="#D4D4D8" stroke="#BDBDC2"/><circle cx="3.8" cy="10.8" r="1.2" fill="#F0F0F0"/></svg></div>
<div class="i" style="left:857px;top:130px"><svg width="16" height="16" viewBox="0 0 16 16"><path d="M1.4 3.2l2.4 -2 3.6 3.6 3.6 -3.6 2.4 2 -3.6 4 3.6 4 -2.4 2 -3.6 -3.6 -3.6 3.6 -2.4 -2 3.6 -4Z" fill="#B4B4B4" stroke="#A4A4A8" stroke-width="0.7" transform="scale(0.9)"/></svg></div>
<div class="i" style="left:880px;top:130px"><svg width="16" height="16" viewBox="0 0 16 16"><path d="M0.6 2.4l2.4 -2 3.6 3.6 3.6 -3.6 2.4 2 -3.6 4 3.6 4 -2.4 2 -3.6 -3.6 -3.6 3.6 -2.4 -2 3.6 -4Z" fill="#E0E0E0" stroke="#B4B4B8" stroke-width="0.8" transform="scale(0.85)"/><path d="M4.2 6.4l2.4 -2 3.6 3.6 3.6 -3.6 2.4 2 -3.6 4 3.6 4 -2.4 2 -3.6 -3.6 -3.6 3.6 -2.4 -2 3.6 -4Z" fill="#BCBCBC" stroke="#A8A8AC" stroke-width="0.8" transform="scale(0.85)"/></svg></div>
<div style="left:825px;top:129px;width:1px;height:18px;background:#BFC0AC"></div>
<svg class="a" width="11" height="6" style="left:904px;top:131px"><path d="M0.5 0.5H10.5L5.5 5Z" fill="#fff" stroke="#55556A" stroke-width="1"/></svg>
<div style="left:547px;top:150px;width:372px;height:1px;background:#C9C6B8"></div>
<div class="white" style="left:547px;top:151px;width:372px;height:17px;"></div>
<div class="white" style="left:547px;top:171px;width:372px;height:8px;"></div>
<div style="left:901px;top:172px;width:17px;height:7px;background:repeating-linear-gradient(to bottom,#B8CBF6 0,#B8CBF6 2px,#fff 2px,#fff 3px)"></div>
<div style="left:8px;top:185px;width:396px;height:228px;border:1px solid #ACA899;border-radius:7px 7px 0 0;background:#fff"></div>
<div style="left:9px;top:186px;width:394px;height:23px;background:#ECE9D8;border-radius:6px 6px 0 0"></div>
<svg class="a" width="396" height="26" style="left:8px;top:185px"><path d="M0.5 23.5 V7 Q0.5 0.5 7.0 0.5 H116 C 123 0.5 126 3.5 130 8.5 L 138 17.5 C 142 22.0 145 23.5 151 23.5  V24.5 H0.5 Z" fill="#fff"/><path d="M0.5 23.5 V7 Q0.5 0.5 7.0 0.5 H116 C 123 0.5 126 3.5 130 8.5 L 138 17.5 C 142 22.0 145 23.5 151 23.5  H395.5" fill="none" stroke="#ACA899"/></svg>
<div class="i" style="left:15px;top:190px"><svg width="12" height="16" viewBox="0 0 12 16"><path d="M0.5 0.5H7.5L10.5 3.5V13.5H0.5Z" fill="#fff" stroke="#A8863C" stroke-dasharray="2 0.6"/><path d="M7.5 0.5L10.5 3.5H7.5Z" fill="#E8C888" stroke="#A8863C" stroke-width="0.6"/><rect x="1" y="1" width="9" height="12" fill="#F2F5FD" opacity="0.7"/><rect x="1.8" y="9.6" width="1.5" height="1.5" fill="#2E58B0"/><text x="3.6" y="11.2" font-family="Liberation Sans" font-weight="bold" font-size="10.5" fill="#2450B0">c</text></svg></div>
<span class="t" style="left:32px;top:192px;;letter-spacing:-0.281px">AQNXCProject.c</span>
<svg class="a" width="10" height="10" style="left:118px;top:192px"><path d="M0.5 0.5H3L5 2.5L7 0.5H9.5V3L7.5 5L9.5 7V9.5H7L5 7.5L3 9.5H0.5V7L2.5 5L0.5 3Z" fill="#fff" stroke="#4A4A6E" stroke-width="1"/></svg>
<div style="left:369px;top:190px;width:10px;height:4px;border:1px solid #55556A;background:#fff"></div><div style="left:387px;top:190px;width:10px;height:10px;border:1px solid #55556A;background:#fff"><div style="left:0;top:1px;width:8px;height:1px;background:#55556A"></div></div>
<div style="left:11px;top:211px;width:12px;height:199px;background:#EDEADB"></div>
<div style="left:23px;top:393px;width:9px;height:17px;background:#ECE9D8"></div>
<div style="left:11px;top:279px;width:12px;height:1px;background:#2A66CC"></div>
<div style="left:11px;top:280px;width:12px;height:101px;background-image:repeating-conic-gradient(#1C5CC8 0 25%,#FFFBEA 0 50%);background-size:2px 2px"></div>
<div style="left:31px;top:211px;width:1px;height:182px;background:#E9E7DD"></div>
<div style="left:32px;top:364px;width:340px;height:17px;background:#E8EEFF"></div>
<span class="c" style="left:33px;top:212px"><span style="color:#7F0055;-webkit-text-stroke:0.25px #7F0055">#include</span> <span style="color:#2A00FF">&lt;stdio.h&gt;</span></span>
<span class="c" style="left:33px;top:229px"><span style="color:#7F0055;-webkit-text-stroke:0.25px #7F0055">#include</span> <span style="color:#2A00FF">&lt;stdlib.h&gt;</span></span>
<span class="c" style="left:33px;top:246px"><span style="color:#7F0055;-webkit-text-stroke:0.25px #7F0055">#include</span> <span style="color:#2A00FF">&lt;string.h&gt;</span></span>
<span class="c" style="left:33px;top:280px"><span style="color:#7F0055;-webkit-text-stroke:0.25px #7F0055">int</span> main(<span style="color:#7F0055;-webkit-text-stroke:0.25px #7F0055">int</span> argc, <span style="color:#7F0055;-webkit-text-stroke:0.25px #7F0055">char</span> ** argv)<span style="outline:1px solid #A0A0A0;outline-offset:-1px">{</span></span>
<span class="c" style="left:33px;top:297px">  <span style="color:#7F0055;-webkit-text-stroke:0.25px #7F0055">char</span> * ptr = NULL;</span>
<span class="c" style="left:33px;top:314px">  ptr = malloc(12);</span>
<span class="c" style="left:33px;top:331px">  strcpy(ptr,<span style="color:#2A00FF">"Hello World!"</span>);</span>
<span class="c" style="left:33px;top:348px">  <span style="color:#7F0055;-webkit-text-stroke:0.25px #7F0055">return</span> 0;</span>
<span class="c" style="left:33px;top:365px">}</span>
<div style="left:372px;top:211px;width:15px;height:183px;background:linear-gradient(to right,#F3F1EC,#FEFEFB)"></div>
<div style="left:372px;top:211px;width:15px;height:16px;background:linear-gradient(to right,#CAD8FD,#B9CAF8);border:1px solid #fff;border-radius:3px;box-shadow:inset 0 0 0 1px #B7C8F5"><svg class="a" width="15" height="16" style="left:-1px;top:-1px"><path d="M3.5 10.0L7.5 6.0L11.5 10.0" fill="none" stroke="#4D6185" stroke-width="2"/></svg></div>
<div style="left:372px;top:377px;width:15px;height:16px;background:linear-gradient(to right,#CAD8FD,#B9CAF8);border:1px solid #fff;border-radius:3px;box-shadow:inset 0 0 0 1px #B7C8F5"><svg class="a" width="15" height="16" style="left:-1px;top:-1px"><path d="M3.5 6.0L7.5 10.0L11.5 6.0" fill="none" stroke="#4D6185" stroke-width="2"/></svg></div>
<div style="left:372px;top:228px;width:15px;height:152px;background:linear-gradient(to right,#CAD8FD,#B9CAF8);border:1px solid #fff;border-radius:2px;box-shadow:inset 0 0 0 1px #B7C8F5"><div style="left:3px;top:72px;width:7px;height:1px;background:#EEF4FE"></div><div style="left:3px;top:74px;width:7px;height:1px;background:#EEF4FE"></div><div style="left:3px;top:76px;width:7px;height:1px;background:#EEF4FE"></div><div style="left:3px;top:78px;width:7px;height:1px;background:#EEF4FE"></div></div>
<div style="left:387px;top:211px;width:14px;height:199px;background:#ECE9D8"></div>
<div style="left:32px;top:394px;width:340px;height:16px;background:linear-gradient(to bottom,#F3F1EC,#FEFEFB)"></div>
<div style="left:32px;top:394px;width:16px;height:16px;background:#EEEDE5;border:1px solid #fff;border-radius:3px;box-shadow:inset 0 0 0 1px #E3E0D4"><svg class="a" width="16" height="16" style="left:-1px;top:-1px"><path d="M10.0 4.0L6.0 8.0L10.0 12.0" fill="none" stroke="#C9C7BA" stroke-width="2"/></svg></div>
<div style="left:356px;top:394px;width:16px;height:16px;background:#EEEDE5;border:1px solid #fff;border-radius:3px;box-shadow:inset 0 0 0 1px #E3E0D4"><svg class="a" width="16" height="16" style="left:-1px;top:-1px"><path d="M6.0 4.0L10.0 8.0L6.0 12.0" fill="none" stroke="#C9C7BA" stroke-width="2"/></svg></div>
<div style="left:372px;top:394px;width:15px;height:16px;background:#ECE9D8"></div>
<div style="left:407px;top:185px;width:514px;height:228px;border:1px solid #ACA899;border-radius:7px 7px 0 0;background:#ECE9D8"></div>
<svg class="a" width="514" height="26" style="left:407px;top:185px"><path d="M62.5 23.5 V5 Q62.5 0.5 67.0 0.5 H158 C 165 0.5 168 3.5 172 8.5 L 180 17.5 C 184 22.0 187 23.5 193 23.5  V24.5 H62.5 Z" fill="url(#gw)"/><path d="M62.5 23.5 V5 Q62.5 0.5 67.0 0.5 H158 C 165 0.5 168 3.5 172 8.5 L 180 17.5 C 184 22.0 187 23.5 193 23.5  H513.5" fill="none" stroke="#ACA899"/></svg>
<svg class="a" width="70" height="26" style="left:407px;top:185px"><path d="M0 23.5H62.5" stroke="#ACA899"/></svg>
<div class="i" style="left:412px;top:189px"><svg width="16" height="16" viewBox="0 0 16 16"><rect x="1.7" y="0.7" width="4.6" height="4.6" fill="#F4F8FF" stroke="#2A6AC4" stroke-width="1.3"/><rect x="1.7" y="9.7" width="4.6" height="4.6" fill="#F4F8FF" stroke="#2A6AC4" stroke-width="1.3"/><path d="M8.5 3H13.5M8.5 12H13.5" stroke="#3A5A9A" stroke-width="1.5"/><rect x="7.4" y="6.3" width="2.6" height="2.2" fill="#3E8A4E"/><path d="M11 7.4H13.5" stroke="#3A5A9A" stroke-width="1.4"/></svg></div>
<span class="t" style="left:430px;top:192px;;letter-spacing:-0.125px">Outline</span>
<div class="i" style="left:475px;top:189px"><svg width="13" height="16" viewBox="0 0 13 16"><path d="M0.5 0.5H7.5L11.5 4.5V14.5H0.5Z" fill="#fff" stroke="#B8B8C8" stroke-width="0.8"/><path d="M0.5 14.5V0.5H7.5" fill="none" stroke="#B89858"/><path d="M7.5 0.5L11.5 4.5H7.5Z" fill="#E8C888" stroke="#B89858" stroke-width="0.6"/><path d="M2.5 3.5H6.5M2.5 5.5H9" stroke="#5A80D0" stroke-width="1"/><text x="0.8" y="13.6" font-family="Liberation Serif" font-weight="bold" font-size="8.2" fill="#14245E" letter-spacing="-0.35">010</text></svg></div>
<span class="t" style="left:492px;top:192px;;letter-spacing:-0.349px">Disassembly</span>
<svg class="a" width="10" height="10" style="left:559px;top:192px"><path d="M0.5 0.5H3L5 2.5L7 0.5H9.5V3L7.5 5L9.5 7V9.5H7L5 7.5L3 9.5H0.5V7L2.5 5L0.5 3Z" fill="#fff" stroke="#4A4A6E" stroke-width="1"/></svg>
<div class="i" style="left:820px;top:190px"><svg width="15" height="16" viewBox="0 0 15 16"><defs><linearGradient id="gda" x1="0" y1="0" x2="1" y2="0"><stop offset="0" stop-color="#C4CCF0"/><stop offset="1" stop-color="#6E80C8"/></linearGradient></defs><path d="M4.5 1.5H10.5V7H14L7.5 13.5L1 7H4.5Z" fill="url(#gda)" stroke="#5A6CBC" stroke-width="1" stroke-linejoin="round"/></svg></div>
<div class="i" style="left:843px;top:190px"><svg width="15" height="16" viewBox="0 0 15 16"><defs><linearGradient id="gua" x1="0" y1="0" x2="1" y2="0"><stop offset="0" stop-color="#C4CCF0"/><stop offset="1" stop-color="#6E80C8"/></linearGradient></defs><path d="M4.5 13.5H10.5V8H14L7.5 1.5L1 8H4.5Z" fill="url(#gua)" stroke="#5A6CBC" stroke-width="1" stroke-linejoin="round"/></svg></div>
<svg class="a" width="11" height="6" style="left:867px;top:190px"><path d="M0.5 0.5H10.5L5.5 5Z" fill="#fff" stroke="#55556A" stroke-width="1"/></svg>
<div style="left:886px;top:190px;width:10px;height:4px;border:1px solid #55556A;background:#fff"></div><div style="left:904px;top:190px;width:10px;height:10px;border:1px solid #55556A;background:#fff"><div style="left:0;top:1px;width:8px;height:1px;background:#55556A"></div></div>
<div class="white" style="left:423px;top:211px;width:466px;height:183px;"></div>
<div style="left:423px;top:211px;width:466px;height:17px;background:#E8EEFF"></div>
<div style="left:889px;top:211px;width:15px;height:183px;background:linear-gradient(to right,#F3F1EC,#FEFEFB)"></div>
<div style="left:889px;top:211px;width:15px;height:16px;background:#EEEDE5;border:1px solid #fff;border-radius:3px;box-shadow:inset 0 0 0 1px #E3E0D4"><svg class="a" width="15" height="16" style="left:-1px;top:-1px"><path d="M3.5 10.0L7.5 6.0L11.5 10.0" fill="none" stroke="#C9C7BA" stroke-width="2"/></svg></div>
<div style="left:889px;top:377px;width:15px;height:16px;background:#EEEDE5;border:1px solid #fff;border-radius:3px;box-shadow:inset 0 0 0 1px #E3E0D4"><svg class="a" width="15" height="16" style="left:-1px;top:-1px"><path d="M3.5 6.0L7.5 10.0L11.5 6.0" fill="none" stroke="#C9C7BA" stroke-width="2"/></svg></div>
<div style="left:423px;top:394px;width:466px;height:16px;background:linear-gradient(to bottom,#F3F1EC,#FEFEFB)"></div>
<div style="left:423px;top:394px;width:16px;height:16px;background:#EEEDE5;border:1px solid #fff;border-radius:3px;box-shadow:inset 0 0 0 1px #E3E0D4"><svg class="a" width="16" height="16" style="left:-1px;top:-1px"><path d="M10.0 4.0L6.0 8.0L10.0 12.0" fill="none" stroke="#C9C7BA" stroke-width="2"/></svg></div>
<div style="left:872px;top:394px;width:16px;height:16px;background:#EEEDE5;border:1px solid #fff;border-radius:3px;box-shadow:inset 0 0 0 1px #E3E0D4"><svg class="a" width="16" height="16" style="left:-1px;top:-1px"><path d="M6.0 4.0L10.0 8.0L6.0 12.0" fill="none" stroke="#C9C7BA" stroke-width="2"/></svg></div>
<div style="left:8px;top:416px;width:913px;height:350px;border:1px solid #ACA899;border-radius:7px 7px 0 0;background:#ECE9D8"></div>
<svg class="a" width="913" height="26" style="left:8px;top:416px"><path d="M285.5 23.5 V5 Q285.5 0.5 290.0 0.5 H408 C 415 0.5 418 3.5 422 8.5 L 430 17.5 C 434 22.0 437 23.5 443 23.5  V24.5 H285.5 Z" fill="url(#gb)"/><path d="M285.5 23.5 V5 Q285.5 0.5 290.0 0.5 H408 C 415 0.5 418 3.5 422 8.5 L 430 17.5 C 434 22.0 437 23.5 443 23.5  H912.5" fill="none" stroke="#ACA899"/></svg>
<svg class="a" width="300" height="26" style="left:8px;top:416px"><path d="M0 23.5H285.5" stroke="#ACA899"/><path d="M72.5 23.5V9Q73 1.5 80 0.5M127.5 23.5V9Q128 1.5 135 0.5M199.5 23.5V9Q200 1.5 207 0.5" fill="none" stroke="#ACA899"/></svg>
<div style="left:9px;top:440px;width:911px;height:2px;background:#A4C1F4"></div>
<div style="left:9px;top:440px;width:2px;height:323px;background:#A4C1F4"></div>
<div style="left:918px;top:440px;width:2px;height:323px;background:#A4C1F4"></div>
<div style="left:9px;top:760px;width:911px;height:2px;background:#A4C1F4"></div>
<div style="left:9px;top:762px;width:911px;height:1px;background:#ECE9D8"></div>
<div class="i" style="left:13px;top:420px"><svg width="15" height="15" viewBox="0 0 15 15"><rect x="1.7" y="1.7" width="11.6" height="8.6" fill="#F0F6FF" stroke="#2E62B4" stroke-width="1.6"/><path d="M4 4.6H8M4 6.6H10.4" stroke="#1E3470" stroke-width="1.1"/><path d="M5.6 11V12.6H9.4V11Z" fill="#3A6EC0"/><path d="M2.4 13.4H12.6" stroke="#2E62B4" stroke-width="1.3"/></svg></div>
<span class="t" style="left:32px;top:423px;font-weight:bold;letter-spacing:0.085px">Console</span>
<div class="i" style="left:85px;top:420px"><svg width="16" height="16" viewBox="0 0 16 16"><rect x="4.5" y="2.5" width="10" height="12" fill="#fff" stroke="#C4A060"/><rect x="7" y="0.6" width="5" height="3" rx="1" fill="#B4B4B8" stroke="#8A8A90" stroke-width="0.7"/><path d="M8.6 6.5H13M8.6 9H13M8.6 11.5H13" stroke="#8C9CC8" stroke-width="1.1"/><path d="M0.8 8L3.6 11.2L8 4.4" fill="none" stroke="#2254C0" stroke-width="1.9"/></svg></div>
<span class="t" style="left:104px;top:423px;;letter-spacing:-0.225px">Tasks</span>
<div class="i" style="left:139px;top:420px"><svg width="15" height="16" viewBox="0 0 15 16"><path d="M1.5 1.5H13.5V8Q12.5 9.5 13.5 11V14.5H1.5Z" fill="#FBFBFB" stroke="#9A9AA4" stroke-width="0.9"/><circle cx="5.4" cy="4.6" r="3" fill="#E8483E" stroke="#B4261E" stroke-width="0.7"/><path d="M4 4.6H6.8" stroke="#F8C0B8" stroke-width="0.9"/><path d="M10 3.6H12.4M10 5.6H12.4M10 11H12.4M10 13H12.4" stroke="#9A9AA4" stroke-width="0.9"/><path d="M5.4 8.4L8.4 13.8H2.4Z" fill="#F8C848" stroke="#D08418" stroke-width="0.9" stroke-linejoin="round"/><path d="M5.4 10.4V12.6" stroke="#B4540C" stroke-width="1"/></svg></div>
<span class="t" style="left:158px;top:423px;;letter-spacing:-0.309px">Problems</span>
<div class="i" style="left:211px;top:420px"><svg width="15" height="16" viewBox="0 0 15 16"><defs><radialGradient id="ge" cx="45%" cy="40%" r="65%"><stop offset="0" stop-color="#7CA4EC"/><stop offset="0.7" stop-color="#3C6CD0"/><stop offset="1" stop-color="#2A52B0"/></radialGradient></defs><circle cx="7.5" cy="7.6" r="7" fill="#B4C4E4"/><circle cx="7.5" cy="7.6" r="5.8" fill="url(#ge)"/><path d="M5.2 3.4L11.6 7.6L5.2 11.8Z" fill="#fff"/></svg></div>
<span class="t" style="left:229px;top:423px;;letter-spacing:-0.134px">Executables</span>
<div class="i" style="left:297px;top:420px"><svg width="16" height="16" viewBox="0 0 16 16"><rect x="0.5" y="0.5" width="11" height="10" fill="#fff" stroke="#6A6490"/><rect x="0" y="0" width="12" height="2.6" fill="#6F6AA6"/><path d="M0 1.2H12" stroke="#B8B4E0" stroke-width="0.6"/><rect x="1" y="2.6" width="2.4" height="7.4" fill="#C4C4C0"/><path d="M10.2 4.6V6.8M10.2 13V15.4M5 9.9H7.2M13.2 9.9H15.6M6.6 6.3L8.2 7.9M12.2 11.9L13.8 13.5M13.8 6.3L12.2 7.9M6.6 13.5L8.2 11.9" stroke="#26262E" stroke-width="1.1"/><circle cx="10.2" cy="9.9" r="2.9" fill="#F0F0F0" stroke="#26262E" stroke-width="1.1"/><circle cx="10.2" cy="9.9" r="1" fill="#8A8A92"/></svg></div>
<span class="t" style="left:315px;top:423px;;letter-spacing:-0.180px">Mudflap Violations</span>
<svg class="a" width="10" height="10" style="left:410px;top:423px"><path d="M0.5 0.5H3L5 2.5L7 0.5H9.5V3L7.5 5L9.5 7V9.5H7L5 7.5L3 9.5H0.5V7L2.5 5L0.5 3Z" fill="#fff" stroke="#4A4A6E" stroke-width="1"/></svg>
<div class="i" style="left:785px;top:420px"><svg width="16" height="16" viewBox="0 0 16 16"><path d="M0.5 0.5H10.5V10.5L7.5 13.5H0.5Z" fill="#fff" stroke="#C4A060"/><path d="M2 3.5H9M2 5.5H7M2 7.5H6M2 9.5H6" stroke="#9CAAC8" stroke-width="1"/><defs><linearGradient id="gex" x1="0" y1="0" x2="0" y2="1"><stop offset="0" stop-color="#3E6ED0"/><stop offset="1" stop-color="#6CC8B8"/></linearGradient></defs><path d="M8.4 2.6H12.6V7H15L10.6 11.6L6.2 7H8.4Z" fill="url(#gex)" stroke="#2A58B0" stroke-width="0.8" stroke-linejoin="round"/><rect x="6.7" y="11.7" width="9" height="3.8" fill="#2E62C8" stroke="#1E3E8E" stroke-width="0.7"/><path d="M8.2 13.6H14.4" stroke="#fff" stroke-width="1.1" stroke-dasharray="1.3 0.9"/></svg></div>
<svg class="a" width="5" height="3" style="left:807px;top:426px" shape-rendering="crispEdges"><path d="M0 0H5V1H0ZM1 1H4V2H1ZM2 2H3V3H2Z" fill="#000"/></svg>
<div class="i" style="left:821px;top:420px"><svg width="16" height="16" viewBox="0 0 16 16"><defs><linearGradient id="gsl" x1="0" y1="0" x2="1" y2="1"><stop offset="0" stop-color="#C4D8F8"/><stop offset="1" stop-color="#F8FBFF"/></linearGradient></defs><rect x="1.5" y="1" width="9.6" height="13.6" fill="url(#gsl)" stroke="#9CB4E4" stroke-width="0.8"/><rect x="11" y="1" width="4" height="13.6" fill="#E4ECFA" stroke="#7C9CD8" stroke-width="0.8"/><rect x="11.8" y="2" width="2.4" height="2.6" fill="#3464C8"/><rect x="11.8" y="11" width="2.4" height="2.6" fill="#3464C8"/><rect x="11.8" y="5.6" width="2.4" height="4.4" fill="#C8D8F4"/><path d="M2.2 10V8.4Q2.2 6.4 4.2 6.4Q6.2 6.4 6.2 8.4V10" fill="none" stroke="#D8A020" stroke-width="1.4"/><rect x="0.6" y="9.6" width="7.2" height="5.6" rx="0.9" fill="#F8CC50" stroke="#C88C18" stroke-width="0.9"/><rect x="3.4" y="11.4" width="1.6" height="2" fill="#7A5408"/></svg></div>
<div class="i" style="left:844px;top:420px"><svg width="16" height="16" viewBox="0 0 16 16"><path d="M7.4 6.6Q8.4 2.6 12 3.4" fill="none" stroke="#D88E14" stroke-width="3.6"/><path d="M10.6 1.2L15.4 1.8L13.6 7.6Z" fill="#F8CC50" stroke="#D88E14" stroke-width="0.9" stroke-linejoin="round"/><path d="M7.4 6.6Q8.4 2.6 12 3.4" fill="none" stroke="#F8CC50" stroke-width="1.9"/><path d="M8.2 8.6Q7.2 12.6 3.6 11.8" fill="none" stroke="#D88E14" stroke-width="3.6"/><path d="M5 14L0.2 13.4L2 7.6Z" fill="#F8CC50" stroke="#D88E14" stroke-width="0.9" stroke-linejoin="round"/><path d="M8.2 8.6Q7.2 12.6 3.6 11.8" fill="none" stroke="#F8CC50" stroke-width="1.9"/></svg></div>
<svg class="a" width="11" height="6" style="left:867px;top:421px"><path d="M0.5 0.5H10.5L5.5 5Z" fill="#fff" stroke="#55556A" stroke-width="1"/></svg>
<div style="left:886px;top:421px;width:10px;height:4px;border:1px solid #55556A;background:#fff"></div><div style="left:904px;top:421px;width:10px;height:10px;border:1px solid #55556A;background:#fff"><div style="left:0;top:1px;width:8px;height:1px;background:#55556A"></div></div>
<span class="t" style="left:16px;top:448px;;letter-spacing:-0.027px">C:\ide-4.6-workspace\AQNXCProject/output.mudflap</span>
<div style="left:16px;top:466px;width:881px;height:18px;background:#ECE9D8;border-bottom:1px solid #D8D4C4;box-shadow:inset 0 -2px 0 #E4E0D0"></div>
<div style="left:319px;top:469px;width:1px;height:13px;background:#BDB9A8"></div>
<div style="left:320px;top:469px;width:1px;height:13px;background:#fff"></div>
<div style="left:620px;top:469px;width:1px;height:13px;background:#BDB9A8"></div>
<div style="left:621px;top:469px;width:1px;height:13px;background:#fff"></div>
<div style="left:669px;top:469px;width:1px;height:13px;background:#BDB9A8"></div>
<div style="left:670px;top:469px;width:1px;height:13px;background:#fff"></div>
<div style="left:769px;top:469px;width:1px;height:13px;background:#BDB9A8"></div>
<div style="left:770px;top:469px;width:1px;height:13px;background:#fff"></div>
<span class="t" style="left:25px;top:469px;;letter-spacing:-0.224px">Violation</span>
<span class="t" style="left:328px;top:469px;;letter-spacing:-0.078px">Location</span>
<span class="t" style="left:629px;top:469px;;letter-spacing:-0.146px">Thread</span>
<span class="t" style="left:679px;top:469px;;letter-spacing:-0.383px">Time</span>
<div class="white" style="left:16px;top:484px;width:881px;height:266px;"></div>
<div style="left:897px;top:466px;width:15px;height:284px;background:linear-gradient(to right,#F3F1EC,#FEFEFB)"></div>
<div style="left:897px;top:466px;width:15px;height:16px;background:linear-gradient(to right,#CAD8FD,#B9CAF8);border:1px solid #fff;border-radius:3px;box-shadow:inset 0 0 0 1px #B7C8F5"><svg class="a" width="15" height="16" style="left:-1px;top:-1px"><path d="M3.5 10.0L7.5 6.0L11.5 10.0" fill="none" stroke="#4D6185" stroke-width="2"/></svg></div>
<div style="left:897px;top:734px;width:15px;height:16px;background:linear-gradient(to right,#CAD8FD,#B9CAF8);border:1px solid #fff;border-radius:3px;box-shadow:inset 0 0 0 1px #B7C8F5"><svg class="a" width="15" height="16" style="left:-1px;top:-1px"><path d="M3.5 6.0L7.5 10.0L11.5 6.0" fill="none" stroke="#4D6185" stroke-width="2"/></svg></div>
<div style="left:897px;top:482px;width:15px;height:209px;background:linear-gradient(to right,#CAD8FD,#B9CAF8);border:1px solid #fff;border-radius:2px;box-shadow:inset 0 0 0 1px #B7C8F5"><div style="left:3px;top:100px;width:7px;height:1px;background:#EEF4FE"></div><div style="left:3px;top:102px;width:7px;height:1px;background:#EEF4FE"></div><div style="left:3px;top:104px;width:7px;height:1px;background:#EEF4FE"></div><div style="left:3px;top:106px;width:7px;height:1px;background:#EEF4FE"></div></div>
<div style="left:16px;top:484px;width:881px;height:266px;overflow:hidden"><div style="left:-16px;top:-484px;width:927px;height:763px"><div style="left:27px;top:499px;width:1px;height:245px;background:repeating-linear-gradient(to bottom,#9A9A9A 0,#9A9A9A 1px,transparent 1px,transparent 2px)"></div><div style="left:46px;top:502px;width:1px;height:21px;background:repeating-linear-gradient(to bottom,#9A9A9A 0,#9A9A9A 1px,transparent 1px,transparent 2px)"></div><div style="left:65px;top:535px;width:1px;height:5px;background:repeating-linear-gradient(to bottom,#9A9A9A 0,#9A9A9A 1px,transparent 1px,transparent 2px)"></div><div style="left:84px;top:551px;width:1px;height:63px;background:repeating-linear-gradient(to bottom,#9A9A9A 0,#9A9A9A 1px,transparent 1px,transparent 2px)"></div><div style="left:46px;top:637px;width:1px;height:90px;background:repeating-linear-gradient(to bottom,#9A9A9A 0,#9A9A9A 1px,transparent 1px,transparent 2px)"></div><div style="left:65px;top:653px;width:1px;height:63px;background:repeating-linear-gradient(to bottom,#9A9A9A 0,#9A9A9A 1px,transparent 1px,transparent 2px)"></div><div style="left:32px;top:493px;width:6px;height:1px;background:repeating-linear-gradient(to right,#9A9A9A 0,#9A9A9A 1px,transparent 1px,transparent 2px)"></div><div style="left:23px;top:489px;width:9px;height:9px;border:1px solid #7898C0;background:linear-gradient(135deg,#fff 40%,#DAD6C6);border-radius:1px"><div style="left:1px;top:3px;width:5px;height:1px;background:#000"></div></div><div class="i" style="left:39px;top:486px"><svg width="16" height="16" viewBox="0 0 16 16"><defs><radialGradient id="gr" cx="42%" cy="35%" r="70%"><stop offset="0" stop-color="#F48A80"/><stop offset="0.6" stop-color="#E2382E"/><stop offset="1" stop-color="#C41E1A"/></radialGradient></defs><circle cx="7.5" cy="7" r="5.7" fill="url(#gr)" stroke="#D84A42" stroke-width="0.7"/><path d="M5 4.4L10 9.6M10 4.4L5 9.6" stroke="#fff" stroke-width="1.9"/></svg></div><div style="left:57px;top:485px;width:166px;height:17px;background:#316AC5;outline:1px dotted #E8C890;outline-offset:-1px"></div><span class="t" style="left:58px;top:488px;color:#fff;letter-spacing:0.102px">write out of bounds (strcpy dest)</span><span class="t" style="left:325px;top:488px;;letter-spacing:0.144px">(strcpy dest)</span><span class="t" style="left:626px;top:488px;">1</span><span class="t" style="left:675px;top:488px;;letter-spacing:0.182px">09:30.57.185</span><div style="left:51px;top:510px;width:6px;height:1px;background:repeating-linear-gradient(to right,#9A9A9A 0,#9A9A9A 1px,transparent 1px,transparent 2px)"></div><div style="left:42px;top:506px;width:9px;height:9px;border:1px solid #7898C0;background:linear-gradient(135deg,#fff 40%,#DAD6C6);border-radius:1px"><div style="left:1px;top:3px;width:5px;height:1px;background:#000"></div><div style="left:3px;top:1px;width:1px;height:5px;background:#000"></div></div><div class="i" style="left:58px;top:503px"><svg width="16" height="16" viewBox="0 0 16 16"><rect x="1" y="1" width="12" height="1" fill="#1A5CB8"/><rect x="1" y="2" width="12" height="1" fill="#3C84D4"/><rect x="1" y="4" width="12" height="1" fill="#1A5CB8"/><rect x="1" y="5" width="12" height="1" fill="#3C84D4"/><rect x="1" y="7" width="12" height="1" fill="#1A5CB8"/><rect x="1" y="8" width="12" height="1" fill="#3C84D4"/><rect x="1" y="10" width="12" height="1" fill="#1A5CB8"/><rect x="1" y="11" width="12" height="1" fill="#3C84D4"/></svg></div><span class="t" style="left:77px;top:505px;;letter-spacing:-0.013px">backtrace</span><span class="t" style="left:325px;top:505px;;letter-spacing:-0.100px">0xb8207c02</span><span class="t" style="left:675px;top:505px;;letter-spacing:0.182px">09:30.57.185</span><div style="left:51px;top:527px;width:6px;height:1px;background:repeating-linear-gradient(to right,#9A9A9A 0,#9A9A9A 1px,transparent 1px,transparent 2px)"></div><div style="left:42px;top:523px;width:9px;height:9px;border:1px solid #7898C0;background:linear-gradient(135deg,#fff 40%,#DAD6C6);border-radius:1px"><div style="left:1px;top:3px;width:5px;height:1px;background:#000"></div></div><div class="i" style="left:58px;top:520px"><svg width="16" height="16" viewBox="0 0 16 16"><rect x="0.5" y="-0.5" width="14" height="14" fill="#fff" stroke="#54709C"/><rect x="1" y="0" width="13" height="3" fill="#D8E6F8"/><path d="M1 1H14M1 3H14" stroke="#4A80C8" stroke-width="0.9"/><circle cx="7.5" cy="6" r="1.6" fill="#9CC0F0" stroke="#1E4A9A" stroke-width="1.1"/><circle cx="4.5" cy="10.4" r="1.6" fill="#9CC0F0" stroke="#1E4A9A" stroke-width="1.1"/><circle cx="10.5" cy="10.4" r="1.6" fill="#9CC0F0" stroke="#1E4A9A" stroke-width="1.1"/></svg></div><span class="t" style="left:77px;top:522px;;letter-spacing:-0.013px">malloc region[12] (heap) accessed at [0..12]</span><span class="t" style="left:325px;top:522px;;letter-spacing:-0.234px">malloc region</span><div style="left:70px;top:544px;width:6px;height:1px;background:repeating-linear-gradient(to right,#9A9A9A 0,#9A9A9A 1px,transparent 1px,transparent 2px)"></div><div style="left:61px;top:540px;width:9px;height:9px;border:1px solid #7898C0;background:linear-gradient(135deg,#fff 40%,#DAD6C6);border-radius:1px"><div style="left:1px;top:3px;width:5px;height:1px;background:#000"></div></div><div class="i" style="left:77px;top:537px"><svg width="16" height="16" viewBox="0 0 16 16"><path d="M3.6 4.2Q4.4 2.6 6.6 3.2Q8.4 3.8 8.6 5.2L9.4 3.6L13 7.6L8.4 11.6L8.2 9.8Q5.4 10 4.6 7.8Q6.2 8.4 7 7.4Q5.6 4.6 3.6 4.2Z" fill="#B8C4F4" stroke="#1432C0" stroke-width="1.1" stroke-linejoin="round"/></svg></div><span class="t" style="left:96px;top:539px;;letter-spacing:-0.127px">alloc backtrace</span><span class="t" style="left:325px;top:539px;;letter-spacing:-0.083px">0xb820758e</span><span class="t" style="left:626px;top:539px;">1</span><span class="t" style="left:675px;top:539px;;letter-spacing:0.182px">09:30.57.185</span><div style="left:84px;top:561px;width:11px;height:1px;background:repeating-linear-gradient(to right,#9A9A9A 0,#9A9A9A 1px,transparent 1px,transparent 2px)"></div><div class="i" style="left:96px;top:554px"><svg width="16" height="16" viewBox="0 0 16 16"><rect x="1" y="1" width="12" height="1" fill="#1A5CB8"/><rect x="1" y="2" width="12" height="1" fill="#3C84D4"/><rect x="1" y="5" width="12" height="1" fill="#1A5CB8"/><rect x="1" y="6" width="12" height="1" fill="#3C84D4"/><rect x="1" y="9" width="12" height="1" fill="#1A5CB8"/><rect x="1" y="10" width="12" height="1" fill="#3C84D4"/></svg></div><span class="t" style="left:115px;top:556px;;letter-spacing:0.044px">[0] libmudflapth.so.0 (__mf_register)</span><span class="t" style="left:325px;top:556px;;letter-spacing:0.056px">libmudflapth.so.0(__mf_register+0x3e) [0xb820758e]</span><div style="left:84px;top:578px;width:11px;height:1px;background:repeating-linear-gradient(to right,#9A9A9A 0,#9A9A9A 1px,transparent 1px,transparent 2px)"></div><div class="i" style="left:96px;top:571px"><svg width="16" height="16" viewBox="0 0 16 16"><rect x="1" y="1" width="12" height="1" fill="#1A5CB8"/><rect x="1" y="2" width="12" height="1" fill="#3C84D4"/><rect x="1" y="5" width="12" height="1" fill="#1A5CB8"/><rect x="1" y="6" width="12" height="1" fill="#3C84D4"/><rect x="1" y="9" width="12" height="1" fill="#1A5CB8"/><rect x="1" y="10" width="12" height="1" fill="#3C84D4"/></svg></div><span class="t" style="left:115px;top:573px;;letter-spacing:-0.043px">[1] libmudflapth.so.0 (__real_malloc)</span><span class="t" style="left:325px;top:573px;;letter-spacing:-0.007px">libmudflapth.so.0(__real_malloc+0xba) [0xb8208b6a]</span><div style="left:84px;top:595px;width:11px;height:1px;background:repeating-linear-gradient(to right,#9A9A9A 0,#9A9A9A 1px,transparent 1px,transparent 2px)"></div><div class="i" style="left:96px;top:588px"><svg width="16" height="16" viewBox="0 0 16 16"><rect x="1" y="1" width="12" height="1" fill="#1A5CB8"/><rect x="1" y="2" width="12" height="1" fill="#3C84D4"/><rect x="1" y="5" width="12" height="1" fill="#1A5CB8"/><rect x="1" y="6" width="12" height="1" fill="#3C84D4"/><rect x="1" y="9" width="12" height="1" fill="#1A5CB8"/><rect x="1" y="10" width="12" height="1" fill="#3C84D4"/></svg></div><span class="t" style="left:115px;top:590px;;letter-spacing:-0.156px">[2] AQNXCProject (main)</span><span class="t" style="left:325px;top:590px;;letter-spacing:-0.072px">AQNXCProject(main+0x18) [0x8049004]</span><div style="left:84px;top:612px;width:11px;height:1px;background:repeating-linear-gradient(to right,#9A9A9A 0,#9A9A9A 1px,transparent 1px,transparent 2px)"></div><div class="i" style="left:96px;top:605px"><svg width="16" height="16" viewBox="0 0 16 16"><rect x="1" y="1" width="12" height="1" fill="#1A5CB8"/><rect x="1" y="2" width="12" height="1" fill="#3C84D4"/><rect x="1" y="5" width="12" height="1" fill="#1A5CB8"/><rect x="1" y="6" width="12" height="1" fill="#3C84D4"/><rect x="1" y="9" width="12" height="1" fill="#1A5CB8"/><rect x="1" y="10" width="12" height="1" fill="#3C84D4"/></svg></div><span class="t" style="left:115px;top:607px;;letter-spacing:-0.002px">[3] libmudflapth.so.0 (__wrap_main)</span><span class="t" style="left:325px;top:607px;;letter-spacing:0.002px">libmudflapth.so.0(__wrap_main+0x41) [0xb8207659]</span><div style="left:32px;top:629px;width:6px;height:1px;background:repeating-linear-gradient(to right,#9A9A9A 0,#9A9A9A 1px,transparent 1px,transparent 2px)"></div><div style="left:23px;top:625px;width:9px;height:9px;border:1px solid #7898C0;background:linear-gradient(135deg,#fff 40%,#DAD6C6);border-radius:1px"><div style="left:1px;top:3px;width:5px;height:1px;background:#000"></div></div><div class="i" style="left:39px;top:622px"><svg width="16" height="16" viewBox="0 0 16 16"><path d="M7 1.6Q7.8 1.6 8.4 2.8L12 10Q12.6 11.6 11 11.8H3Q1.4 11.6 2 10L5.6 2.8Q6.2 1.6 7 1.6Z" fill="#FBD884" stroke="#E0901C" stroke-width="1.1" stroke-linejoin="round"/><path d="M7 4L9.8 10H4.2Z" fill="#FCE6A8"/><path d="M7 4.2V8" stroke="#7A2A10" stroke-width="1.6"/><rect x="6.2" y="8.8" width="1.6" height="1.6" fill="#7A2A10"/></svg></div><span class="t" style="left:58px;top:624px;;letter-spacing:-0.189px">memory leak of size 20</span><div style="left:51px;top:646px;width:6px;height:1px;background:repeating-linear-gradient(to right,#9A9A9A 0,#9A9A9A 1px,transparent 1px,transparent 2px)"></div><div style="left:42px;top:642px;width:9px;height:9px;border:1px solid #7898C0;background:linear-gradient(135deg,#fff 40%,#DAD6C6);border-radius:1px"><div style="left:1px;top:3px;width:5px;height:1px;background:#000"></div></div><div class="i" style="left:58px;top:639px"><svg width="16" height="16" viewBox="0 0 16 16"><path d="M3.6 4.2Q4.4 2.6 6.6 3.2Q8.4 3.8 8.6 5.2L9.4 3.6L13 7.6L8.4 11.6L8.2 9.8Q5.4 10 4.6 7.8Q6.2 8.4 7 7.4Q5.6 4.6 3.6 4.2Z" fill="#B8C4F4" stroke="#1432C0" stroke-width="1.1" stroke-linejoin="round"/></svg></div><span class="t" style="left:77px;top:641px;;letter-spacing:-0.127px">alloc backtrace</span><span class="t" style="left:325px;top:641px;;letter-spacing:-0.083px">0xb820758e</span><span class="t" style="left:626px;top:641px;">1</span><span class="t" style="left:675px;top:641px;;letter-spacing:0.182px">09:30.57.182</span><div style="left:65px;top:663px;width:11px;height:1px;background:repeating-linear-gradient(to right,#9A9A9A 0,#9A9A9A 1px,transparent 1px,transparent 2px)"></div><div class="i" style="left:77px;top:656px"><svg width="16" height="16" viewBox="0 0 16 16"><rect x="1" y="1" width="12" height="1" fill="#1A5CB8"/><rect x="1" y="2" width="12" height="1" fill="#3C84D4"/><rect x="1" y="5" width="12" height="1" fill="#1A5CB8"/><rect x="1" y="6" width="12" height="1" fill="#3C84D4"/><rect x="1" y="9" width="12" height="1" fill="#1A5CB8"/><rect x="1" y="10" width="12" height="1" fill="#3C84D4"/></svg></div><span class="t" style="left:96px;top:658px;;letter-spacing:0.044px">[0] libmudflapth.so.0 (__mf_register)</span><span class="t" style="left:325px;top:658px;;letter-spacing:0.056px">libmudflapth.so.0(__mf_register+0x3e) [0xb820758e]</span><div style="left:65px;top:680px;width:11px;height:1px;background:repeating-linear-gradient(to right,#9A9A9A 0,#9A9A9A 1px,transparent 1px,transparent 2px)"></div><div class="i" style="left:77px;top:673px"><svg width="16" height="16" viewBox="0 0 16 16"><rect x="1" y="1" width="12" height="1" fill="#1A5CB8"/><rect x="1" y="2" width="12" height="1" fill="#3C84D4"/><rect x="1" y="5" width="12" height="1" fill="#1A5CB8"/><rect x="1" y="6" width="12" height="1" fill="#3C84D4"/><rect x="1" y="9" width="12" height="1" fill="#1A5CB8"/><rect x="1" y="10" width="12" height="1" fill="#3C84D4"/></svg></div><span class="t" style="left:96px;top:675px;;letter-spacing:-0.043px">[1] libmudflapth.so.0 (__real_malloc)</span><span class="t" style="left:325px;top:675px;;letter-spacing:-0.007px">libmudflapth.so.0(__real_malloc+0xba) [0xb8208b6a]</span><div style="left:65px;top:697px;width:11px;height:1px;background:repeating-linear-gradient(to right,#9A9A9A 0,#9A9A9A 1px,transparent 1px,transparent 2px)"></div><div class="i" style="left:77px;top:690px"><svg width="16" height="16" viewBox="0 0 16 16"><rect x="1" y="1" width="12" height="1" fill="#1A5CB8"/><rect x="1" y="2" width="12" height="1" fill="#3C84D4"/><rect x="1" y="5" width="12" height="1" fill="#1A5CB8"/><rect x="1" y="6" width="12" height="1" fill="#3C84D4"/><rect x="1" y="9" width="12" height="1" fill="#1A5CB8"/><rect x="1" y="10" width="12" height="1" fill="#3C84D4"/></svg></div><span class="t" style="left:96px;top:692px;;letter-spacing:0.188px">[2] libc.so.3 (atexit)</span><span class="t" style="left:325px;top:692px;;letter-spacing:0.072px">libc.so.3(atexit+0x19) [0xb032ac99]</span><div style="left:65px;top:714px;width:11px;height:1px;background:repeating-linear-gradient(to right,#9A9A9A 0,#9A9A9A 1px,transparent 1px,transparent 2px)"></div><div class="i" style="left:77px;top:707px"><svg width="16" height="16" viewBox="0 0 16 16"><rect x="1" y="1" width="12" height="1" fill="#1A5CB8"/><rect x="1" y="2" width="12" height="1" fill="#3C84D4"/><rect x="1" y="5" width="12" height="1" fill="#1A5CB8"/><rect x="1" y="6" width="12" height="1" fill="#3C84D4"/><rect x="1" y="9" width="12" height="1" fill="#1A5CB8"/><rect x="1" y="10" width="12" height="1" fill="#3C84D4"/></svg></div><span class="t" style="left:96px;top:709px;;letter-spacing:0.024px">[3] libc.so.3 (_init_libc)</span><span class="t" style="left:325px;top:709px;;letter-spacing:0.010px">libc.so.3(_init_libc+0x33) [0xb03641b3]</span><div style="left:51px;top:731px;width:6px;height:1px;background:repeating-linear-gradient(to right,#9A9A9A 0,#9A9A9A 1px,transparent 1px,transparent 2px)"></div><div style="left:42px;top:727px;width:9px;height:9px;border:1px solid #7898C0;background:linear-gradient(135deg,#fff 40%,#DAD6C6);border-radius:1px"><div style="left:1px;top:3px;width:5px;height:1px;background:#000"></div><div style="left:3px;top:1px;width:1px;height:5px;background:#000"></div></div><div class="i" style="left:58px;top:724px"><svg width="16" height="16" viewBox="0 0 16 16"><rect x="0.5" y="-0.5" width="14" height="14" fill="#fff" stroke="#54709C"/><rect x="1" y="0" width="13" height="3" fill="#D8E6F8"/><path d="M1 1H14M1 3H14" stroke="#4A80C8" stroke-width="0.9"/><circle cx="7.5" cy="6" r="1.6" fill="#9CC0F0" stroke="#1E4A9A" stroke-width="1.1"/><circle cx="4.5" cy="10.4" r="1.6" fill="#9CC0F0" stroke="#1E4A9A" stroke-width="1.1"/><circle cx="10.5" cy="10.4" r="1.6" fill="#9CC0F0" stroke="#1E4A9A" stroke-width="1.1"/></svg></div><span class="t" style="left:77px;top:726px;;letter-spacing:-0.013px">malloc region[20] (heap) accessed at [0..20]</span><span class="t" style="left:325px;top:726px;;letter-spacing:-0.234px">malloc region</span><div style="left:32px;top:748px;width:6px;height:1px;background:repeating-linear-gradient(to right,#9A9A9A 0,#9A9A9A 1px,transparent 1px,transparent 2px)"></div><div style="left:23px;top:744px;width:9px;height:9px;border:1px solid #7898C0;background:linear-gradient(135deg,#fff 40%,#DAD6C6);border-radius:1px"><div style="left:1px;top:3px;width:5px;height:1px;background:#000"></div><div style="left:3px;top:1px;width:1px;height:5px;background:#000"></div></div><div class="i" style="left:39px;top:741px"><svg width="16" height="16" viewBox="0 0 16 16"><path d="M7 1.6Q7.8 1.6 8.4 2.8L12 10Q12.6 11.6 11 11.8H3Q1.4 11.6 2 10L5.6 2.8Q6.2 1.6 7 1.6Z" fill="#FBD884" stroke="#E0901C" stroke-width="1.1" stroke-linejoin="round"/><path d="M7 4L9.8 10H4.2Z" fill="#FCE6A8"/><path d="M7 4.2V8" stroke="#7A2A10" stroke-width="1.6"/><rect x="6.2" y="8.8" width="1.6" height="1.6" fill="#7A2A10"/></svg></div><span class="t" style="left:58px;top:743px;;letter-spacing:-0.189px">memory leak of size 20</span></div></div>
</body></html>
